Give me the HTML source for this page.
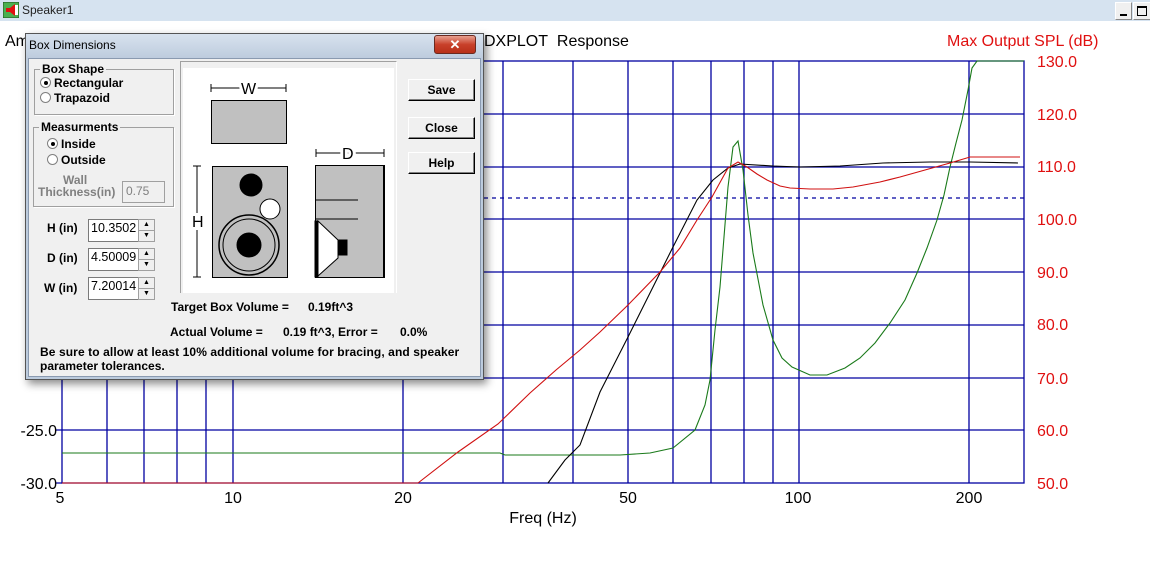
<!DOCTYPE html>
<html><head><meta charset="utf-8"><style>
body{margin:0;width:1150px;height:568px;overflow:hidden;background:#fff;font-family:"Liberation Sans",sans-serif;position:relative}
.a{position:absolute;white-space:nowrap}
.dlg{font-weight:bold;font-size:12px;color:#000}
.btn{position:absolute;width:65px;height:20px;border:1px solid #000;border-top-color:#fff;border-left-color:#fff;box-shadow:inset -1px -1px 0 #808080;background:#f0f0f0;text-align:center;line-height:20px;font-weight:bold;font-size:12px}
.grp{position:absolute;border:1px solid #a0a0a0;box-shadow:1px 1px 0 #fff}
.inp{position:absolute;background:#fff;border:1px solid #7a7a7a;border-right:none;width:50px;height:23px;font-size:12.5px;font-weight:normal;line-height:16px;padding-left:2px;box-sizing:border-box;font-family:"Liberation Sans",sans-serif}
.spin{position:absolute;width:17px;height:23px;border:1px solid #a0a0a0;box-sizing:border-box;background:#f0f0f0}
.spin div{height:10px;border-bottom:1px solid #a0a0a0;font-size:7px;text-align:center;line-height:10px}
.radio{display:inline-block;width:9px;height:9px;border-radius:50%;border:1px solid #808080;background:#fff;vertical-align:-1px;margin-right:3px;position:relative}
.radio.on:after{content:"";position:absolute;left:2.5px;top:2.5px;width:4px;height:4px;border-radius:50%;background:#000}
</style></head><body>
<div class="a" style="left:0;top:0;width:1150px;height:21px;background:#d6e3f0"></div>
<svg class="a" style="left:3px;top:2px" width="16" height="16"><rect x="0" y="0" width="16" height="16" fill="#4caf50" stroke="#205020"/><polygon points="3,6 7,6 12,2 12,14 7,10 3,10" fill="#e01010"/><rect x="12" y="3" width="3" height="10" fill="#fff"/></svg>
<div class="a" style="left:22px;top:3px;font-size:12px;color:#222">Speaker1</div>
<div class="a" style="left:1115px;top:2px;width:15px;height:16px;background:#f0f0f0;border:1px solid #888;border-top-color:#fff;border-left-color:#fff"><div style="position:absolute;left:4px;top:11px;width:7px;height:2px;background:#000"></div></div>
<div class="a" style="left:1133px;top:2px;width:16px;height:16px;background:#f0f0f0;border:1px solid #888;border-top-color:#fff;border-left-color:#fff"><div style="position:absolute;left:3px;top:3px;width:8px;height:7px;border:1px solid #000;border-top-width:2px"></div></div>

<div class="a" style="left:5px;top:33px;font-size:16px">Amplitude Response - BOXPLOT&nbsp; Response</div>
<div class="a" style="left:480px;top:33px;font-size:16px;background:#fff;padding-left:4px">DXPLOT&nbsp; Response</div>
<div class="a" style="left:947px;top:33px;font-size:16px;color:#e01010">Max Output SPL (dB)</div>
<svg class="a" style="left:0;top:0" width="1150" height="568" font-family="Liberation Sans, sans-serif">
<g stroke="#0000a0" stroke-width="1.3" fill="none">
<rect x="62" y="61" width="962" height="422"/>
<path d="M62 114H1024M62 167H1024M62 219H1024M62 272H1024M62 325H1024M62 378H1024M62 430H1024"/>
<path d="M107 61V483M144 61V483M177 61V483M206 61V483M233 61V483M403 61V483M503 61V483M573 61V483M628 61V483M673 61V483M711 61V483M744 61V483M773 61V483M799 61V483M969 61V483"/>
<path d="M484 198H1024" stroke-dasharray="4,4"/>
<path d="M55 430H62M55 483H62"/>
</g>
<g font-size="16" fill="#e01010">
<text x="1037" y="67">130.0</text><text x="1037" y="120">120.0</text><text x="1037" y="172">110.0</text><text x="1037" y="225">100.0</text><text x="1037" y="278">90.0</text><text x="1037" y="330">80.0</text><text x="1037" y="384">70.0</text><text x="1037" y="436">60.0</text><text x="1037" y="489">50.0</text>
</g>
<g font-size="16" fill="#000">
<text x="57" y="436" text-anchor="end">-25.0</text><text x="57" y="489" text-anchor="end">-30.0</text>
<text x="60" y="503" text-anchor="middle">5</text><text x="233" y="503" text-anchor="middle">10</text><text x="403" y="503" text-anchor="middle">20</text><text x="628" y="503" text-anchor="middle">50</text><text x="798" y="503" text-anchor="middle">100</text><text x="969" y="503" text-anchor="middle">200</text>
<text x="543" y="523" text-anchor="middle">Freq (Hz)</text>
</g>
<g fill="none" stroke-width="1.1">
<polyline stroke="#1a7a1a" points="62,453 500,453 505,455 620,455 650,453 673,448 695,430 705,405 710,380 715,330 720,287 728,187 733,147 738,141 743,170 748,215 753,253 763,305 773,340 782,358 792,367 810,375 827,375 845,368 860,358 875,343 890,323 905,300 917,273 927,248 937,220 944,195 950,167 956,143 962,120 968,90 972,68 977,61 1024,61"/>
<polyline stroke="#000" points="548,483 565,460 580,445 600,392 628,337 650,293 673,247 697,200 713,180 728,168 740,164 773,166 800,167 840,166 883,163 930,162 970,162 1018,163"/>
<polyline stroke="#d01010" points="62,483 418,483 458,452 498,424 530,393 556,370 580,350 600,332 628,305 660,272 680,248 697,220 712,197 728,168 738,162 747,167 757,174 767,180 780,186 790,188 810,189 833,189 853,187 880,182 900,177 925,170 950,163 970,157 1020,157"/>
</g>
</svg>

<div class="a" style="left:25px;top:33px;width:459px;height:347px;background:linear-gradient(#d8e2ee,#bccbdd 25px,#bccbdd);border:1px solid #555;box-shadow:3px 4px 8px rgba(0,0,0,.45);box-sizing:border-box"></div>
<div class="a" style="left:29px;top:38px;font-size:12px;color:#000">Box Dimensions</div>
<div class="a" style="left:434px;top:35px;width:40px;height:17px;background:linear-gradient(#e8a090,#c8402a 50%,#b83018);border:1px solid #6a2a20;border-radius:3px;color:#fff;font-size:13px;font-weight:bold;text-align:center;line-height:17px">✕</div>
<div class="a dlg" style="left:28px;top:58px;width:453px;height:319px;background:#f0f0f0;border:1px solid #8a9ab0;box-sizing:border-box"></div>
<div class="grp" style="left:34px;top:69px;width:138px;height:44px"></div>
<div class="a dlg" style="left:40px;top:62px;background:#f0f0f0;padding:0 2px">Box Shape</div>
<div class="a dlg" style="left:40px;top:76px"><span class="radio on"></span>Rectangular</div>
<div class="a dlg" style="left:40px;top:91px"><span class="radio"></span>Trapazoid</div>
<div class="grp" style="left:33px;top:127px;width:139px;height:78px"></div>
<div class="a dlg" style="left:39px;top:120px;background:#f0f0f0;padding:0 2px">Measurments</div>
<div class="a dlg" style="left:47px;top:137px"><span class="radio on"></span>Inside</div>
<div class="a dlg" style="left:47px;top:153px"><span class="radio"></span>Outside</div>
<div class="a dlg" style="left:63px;top:173px;color:#808080">Wall</div>
<div class="a dlg" style="left:38px;top:185px;color:#808080">Thickness(in)</div>
<div class="a" style="left:122px;top:181px;width:43px;height:22px;border:1px solid #a0a0a0;background:#f0f0f0;font-size:12px;color:#808080;padding-left:3px;line-height:18px;box-sizing:border-box">0.75</div>

<div class="a dlg" style="left:47px;top:221px">H (in)</div>
<div class="inp" style="left:88px;top:219px">10.3502</div><div class="spin" style="left:138px;top:219px"><div>▲</div><div style="border:none">▼</div></div>
<div class="a dlg" style="left:47px;top:251px">D (in)</div>
<div class="inp" style="left:88px;top:248px">4.50009</div><div class="spin" style="left:138px;top:248px"><div>▲</div><div style="border:none">▼</div></div>
<div class="a dlg" style="left:44px;top:281px">W (in)</div>
<div class="inp" style="left:88px;top:277px">7.20014</div><div class="spin" style="left:138px;top:277px"><div>▲</div><div style="border:none">▼</div></div>

<div class="btn" style="left:408px;top:79px">Save</div>
<div class="btn" style="left:408px;top:117px">Close</div>
<div class="btn" style="left:408px;top:152px">Help</div>

<div class="a" style="left:180px;top:61px;width:217px;height:232px;border:1px solid #a0a0a0;border-right-color:#fff;border-bottom:none;box-sizing:border-box"></div>
<svg class="a" style="left:183px;top:68px" width="211" height="225"><g transform="translate(-183,-68)">
<rect x="183" y="68" width="211" height="225" fill="#fff"/>
<g stroke="#000" fill="#c0c0c0" stroke-width="1">
<path d="M211 88H286M211 84V92M286 84V92M316 153H384M316 149V157M384 149V157M197 166V277M193 166H201M193 277H201" fill="none"/>
<rect x="211.5" y="100.5" width="75" height="43"/>
<rect x="212.5" y="166.5" width="75" height="111"/>
<rect x="315.5" y="165.5" width="69" height="112"/>
<path d="M384 165V278" stroke-width="2"/>
<circle cx="251" cy="185" r="11" fill="#000"/>
<circle cx="270" cy="209" r="10" fill="#fff"/>
<circle cx="249" cy="245" r="30" stroke-width="1.5"/>
<circle cx="249" cy="245" r="26"/>
<circle cx="249" cy="245" r="12" fill="#000"/>
<path d="M315 200H358M315 219H358" fill="none"/>
<rect x="315" y="221" width="3" height="56" fill="#000"/>
<polygon points="318,221 338,240 338,258 318,276" fill="#fff"/>
<rect x="338" y="240" width="9" height="15" fill="#000"/>
</g>
<g font-size="16" fill="#000"><text x="241" y="94" stroke="#fff" stroke-width="6">W</text><text x="241" y="94">W</text>
<text x="342" y="159" stroke="#fff" stroke-width="6">D</text><text x="342" y="159">D</text>
<text x="192" y="227" stroke="#fff" stroke-width="6">H</text><text x="192" y="227">H</text></g>
</g></svg>

<div class="a dlg" style="left:171px;top:300px">Target Box Volume =</div>
<div class="a dlg" style="left:308px;top:300px">0.19ft^3</div>
<div class="a dlg" style="left:170px;top:325px">Actual Volume =</div>
<div class="a dlg" style="left:283px;top:325px">0.19 ft^3, Error =</div>
<div class="a dlg" style="left:400px;top:325px">0.0%</div>
<div class="a dlg" style="left:40px;top:345px;letter-spacing:0.1px">Be sure to allow at least 10% additional volume for bracing, and speaker</div>
<div class="a dlg" style="left:40px;top:359px">parameter tolerances.</div>
</body></html>
